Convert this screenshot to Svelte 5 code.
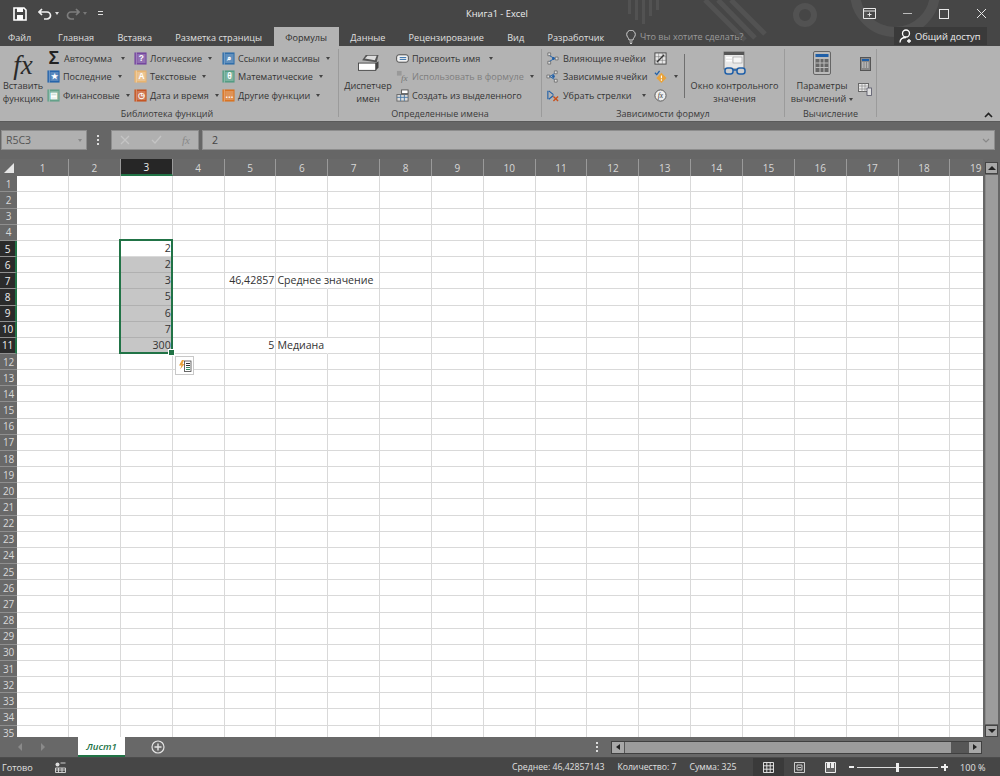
<script>
	const tabs = ['Главная', 'Вставка', 'Разметка страницы', 'Формулы', 'Данные', 'Рецензирование', 'Вид', 'Разработчик'];

	const libCols = [
		[
			{ t: 'Автосумма', k: 'sum', wide: true },
			{ t: 'Последние', k: 'book', c: '#1f5fa8', g: '★' },
			{ t: 'Финансовые', k: 'book', c: '#5f9f86', g: '▤' }
		],
		[
			{ t: 'Логические', k: 'book', c: '#70409c', g: '?' },
			{ t: 'Текстовые', k: 'book', c: '#e8b26c', g: 'A' },
			{ t: 'Дата и время', k: 'book', c: '#c4501c', g: '◷' }
		],
		[
			{ t: 'Ссылки и массивы', k: 'book', c: '#2a6aa8', g: '⌕' },
			{ t: 'Математические', k: 'book', c: '#4f9a80', g: 'θ' },
			{ t: 'Другие функции', k: 'book', c: '#d9701c', g: '…' }
		]
	];

	const rows = Array.from({ length: 35 }, (_, i) => i + 1);
	const cols = Array.from({ length: 19 }, (_, i) => i + 1);
	const cells = {
		'5-3': '2', '6-3': '2', '7-3': '3', '8-3': '5', '9-3': '6', '10-3': '7', '11-3': '300',
		'7-5': '46,42857', '11-5': '5'
	};
	const labels = { '7-6': 'Среднее значение', '11-6': 'Медиана' };
	const selected = (r) => r >= 5 && r <= 11;
</script>

{#snippet arrow()}<span class="caret"></span>{/snippet}

{#snippet book(c, g)}
	<svg class="ico" viewBox="0 0 14 14">
		<rect x="0.5" y="0.5" width="13" height="13" fill={c} />
		<rect x="2" y="0.5" width="0.8" height="13" fill="#fff" fill-opacity="0.55" />
		<rect x="3.500" y="2" width="9" height="10" fill="#f2f2f2" fill-opacity="0.28" />
		<text x="8" y="10.2" text-anchor="middle" font-size="9" font-weight="700" fill="#fff" font-family="Liberation Sans, sans-serif">{g}</text>
	</svg>
{/snippet}

<div class="app">
	<header class="title">
		<svg class="pattern" viewBox="0 0 1000 46">
			<g fill="#525252">
				<rect x="628" y="0" width="3" height="14" /><rect x="635" y="0" width="3" height="20" />
				<rect x="642" y="0" width="3" height="24" /><rect x="649" y="0" width="3" height="16" />
				<rect x="656" y="0" width="3" height="10" />
			</g>
			<g fill="none" stroke="#525252">
				<circle cx="805" cy="15" r="9" stroke-width="6" />
				<circle cx="895" cy="-8" r="40" stroke-width="10" />
				<path d="M705 0 L745 40 M718 0 L755 38 M731 0 L765 34" stroke-width="5" />
			</g>
		</svg>
		<div class="qat">
			<svg width="14" height="14" viewBox="0 0 14 14"><path d="M1 1h10l2 2v10H1z" fill="none" stroke="#fff" stroke-width="1.6" /><rect x="4" y="1" width="6" height="4" fill="#fff" /><rect x="4" y="8" width="6" height="5" fill="#fff" /></svg>
			<svg class="undo" width="14" height="12" viewBox="0 0 14 12"><path d="M4 1 1 4l3 3M1 4h8a3.500 3.500 0 0 1 0 7H6" fill="none" stroke="#f0f0f0" stroke-width="1.7" /></svg>
			{@render arrow()}
			<svg class="redo" width="14" height="12" viewBox="0 0 14 12"><path d="M10 1l3 3-3 3M13 4H5a3.500 3.500 0 0 0 0 7h3" fill="none" stroke="#7d7d7d" stroke-width="1.7" /></svg>
			<span class="caret dim"></span>
			<span class="custom"></span>
		</div>
		<div class="doc">Книга1 - Excel</div>
		<div class="win">
			<svg width="13" height="11" viewBox="0 0 13 11"><path d="M.5.500h12v10H.500zM.5 3h12" fill="none" stroke="#e8e8e8" /><path d="M6.500 4.500v4M4.500 6.500h4" stroke="#e8e8e8" /></svg>
			<span class="min"></span>
			<span class="max"></span>
			<svg width="11" height="11" viewBox="0 0 11 11"><path d="M1 1l9 9M10 1l-9 9" stroke="#e8e8e8" stroke-width="1" /></svg>
		</div>
	</header>

	<nav class="tabs">
		<span class="tab file">Файл</span>
		{#each tabs as t}
			<span class="tab" class:active={t === 'Формулы'}>{t}</span>
		{/each}
		<span class="tell">
			<svg width="10" height="14" viewBox="0 0 10 14"><path d="M3 10c0-2-2.300-3-2.300-5.500a4.300 4.300 0 0 1 8.600 0C9.300 7 7 8 7 10zM3.500 12h3M4 13.500h2" fill="none" stroke="#cfcfcf" /></svg>
			Что вы хотите сделать?
		</span>
		<span class="share">
			<svg width="14" height="14" viewBox="0 0 14 14"><circle cx="7" cy="4.500" r="3.500" fill="none" stroke="#fff" stroke-width="1.300" /><path d="M1 13.500c0-3.500 2.500-5 6-5M10 10v4M8 12h4" fill="none" stroke="#fff" stroke-width="1.300" /></svg>
			Общий доступ
		</span>
	</nav>

	<section class="ribbon">
		<div class="group lib">
			<div class="body">
				<div class="big fxbtn">
					<span class="fxmark">fx</span>
					<span>Вставить<br />функцию</span>
				</div>
				{#each libCols as col, i}
					<div class="col col{i}">
						{#each col as it}
							<div class="item">
								{#if it.k === 'sum'}
									<span class="sigma">Σ</span>
								{:else}
									{@render book(it.c, it.g)}
								{/if}
								<span>{it.t}</span>
								<span class="caret dark" class:wide={it.wide}></span>
							</div>
						{/each}
					</div>
				{/each}
			</div>
			<div class="label">Библиотека функций</div>
		</div>

		<div class="group names">
			<div class="body">
				<div class="big mgr">
					<svg width="23" height="20" viewBox="0 0 24 22">
						<path d="M5 7 9 1h14l-2 8z" fill="#555" /><path d="M8 5l3-3h10l-2 5z" fill="#ddd" />
						<rect x="1" y="10" width="19" height="8" fill="#fff" stroke="#444" />
						<path d="M20 10l3-2v7l-3 3z" fill="#444" />
					</svg>
					<span>Диспетчер<br />имен</span>
				</div>
				<div class="col">
					<div class="item">
						<svg class="ico" viewBox="0 0 14 14"><rect x="0.700" y="3" width="12.600" height="8" rx="2.500" fill="#f2f2f2" stroke="#444" /><path d="M4 6h7M4 8h7" stroke="#2a6aa8" /></svg>
						<span>Присвоить имя</span><span class="caret dark wide"></span>
					</div>
					<div class="item off">
						<svg class="ico" viewBox="0 0 14 14"><rect x="1" y="1" width="5" height="5" fill="#999" /><text x="9" y="12" text-anchor="middle" font-size="10" font-style="italic" font-family="Liberation Serif, serif" fill="#777">fx</text></svg>
						<span>Использовать в формуле</span><span class="caret dark"></span>
					</div>
					<div class="item">
						<svg class="ico" viewBox="0 0 14 14"><rect x="1" y="6" width="12" height="7" fill="#dcdcdc" stroke="#666" /><path d="M1 9h12M5 6v7M9 6v7" stroke="#4a7aa8" /><rect x="6" y="1" width="7" height="4" fill="#fff" stroke="#555" /></svg>
						<span>Создать из выделенного</span>
					</div>
				</div>
			</div>
			<div class="label">Определенные имена</div>
		</div>

		<div class="group deps">
			<div class="body">
				<div class="col tight">
					<div class="item">
						<svg class="ico" viewBox="0 0 14 14"><path d="M2 1h3v3H2zM2 10h3v3H2zM10 5.500h3v3h-3z" fill="#ddd" stroke="#555" stroke-width=".7" /><path d="M4 4l5 3M4 10l5-3" stroke="#1f5fa8" fill="none" /><circle cx="8" cy="7" r="1.500" fill="#1f5fa8" /></svg>
						<span>Влияющие ячейки</span>
					</div>
					<div class="item">
						<svg class="ico" viewBox="0 0 14 14"><path d="M1 5.500h3v3H1zM9 1h3v3H9zM9 10h3v3H9z" fill="#ddd" stroke="#555" stroke-width=".7" /><path d="M4 7l5-3M4 7l5 3" stroke="#1f5fa8" fill="none" /><circle cx="8" cy="7" r="1.500" fill="#1f5fa8" /></svg>
						<span>Зависимые ячейки</span>
					</div>
					<div class="item">
						<svg class="ico" viewBox="0 0 14 14"><path d="M2 2v9M3 2l5 4M3 11l5-4" stroke="#1f5fa8" fill="none" stroke-width="1.200" /><path d="M8 8l5 5M13 8l-5 5" stroke="#c9501c" stroke-width="1.500" /></svg>
						<span>Убрать стрелки</span><span class="caret dark wide"></span>
					</div>
				</div>
				<div class="col small">
					<div class="item">
						<svg class="ico" viewBox="0 0 14 14"><rect x="1" y="1" width="12" height="12" fill="#e8e8e8" stroke="#444" /><path d="M1 5h12M5 1v12M9 1v12M1 9h12" stroke="#777" stroke-width=".6" /><path d="M3 11 11 3" stroke="#333" stroke-width="1.400" /></svg>
					</div>
					<div class="item">
						<svg class="ico" viewBox="0 0 14 14"><path d="M1 3l2 2 3-4" fill="none" stroke="#1f5fa8" stroke-width="1.300" /><path d="M8 3l5.500 5.500L8 14 2.500 8.500z" fill="#e8a33c" /><path d="M8 6v3M8 10v1.500" stroke="#fff" stroke-width="1.200" /></svg>
						<span class="caret dark"></span>
					</div>
					<div class="item">
						<svg class="ico" viewBox="0 0 14 14"><circle cx="7" cy="7" r="6" fill="#eee" stroke="#555" /><text x="7" y="10" text-anchor="middle" font-size="8" font-style="italic" font-family="Liberation Serif, serif" fill="#333">fx</text></svg>
					</div>
				</div>
				<span class="vsep"></span>
				<div class="big watch">
					<svg width="24" height="24" viewBox="0 0 24 24">
						<rect x="1" y="1" width="20" height="17" fill="#e8e8e8" stroke="#777" /><rect x="1" y="1" width="20" height="3" fill="#555" />
						<rect x="3" y="6" width="6" height="1.500" fill="#fff" /><rect x="3" y="9" width="6" height="1.500" fill="#fff" /><rect x="10" y="6" width="9" height="6" fill="#f5f5f5" stroke="#999" stroke-width=".6" />
						<rect x="2" y="17" width="8" height="6" rx="2.500" fill="#ccc" stroke="#1f5fa8" stroke-width="1.500" />
						<rect x="14" y="17" width="8" height="6" rx="2.500" fill="#ccc" stroke="#1f5fa8" stroke-width="1.500" />
						<path d="M10 19h4" stroke="#1f5fa8" stroke-width="1.500" />
					</svg>
					<span>Окно контрольного<br />значения</span>
				</div>
			</div>
			<div class="label">Зависимости формул</div>
		</div>

		<div class="group calc">
			<div class="body">
				<div class="big params">
					<svg width="18" height="24" viewBox="0 0 18 24">
						<rect x=".5" y=".5" width="17" height="23" rx="1.500" fill="#bbb" stroke="#666" />
						<rect x="2.500" y="3" width="13" height="3" fill="#1f5fa8" />
						<g fill="#666"><rect x="2.500" y="8" width="13" height="13" /></g>
						<path d="M7 8v13M11 8v13M2.500 12h13M2.500 16.500h13" stroke="#bbb" />
					</svg>
					<span>Параметры<br />вычислений<span class="caret dark"></span></span>
				</div>
				<div class="col smallcalc">
					<svg width="11" height="14" viewBox="0 0 11 14"><rect x=".5" y=".5" width="10" height="13" fill="#888" stroke="#555" /><rect x="2" y="2" width="7" height="2" fill="#1f5fa8" /><path d="M2 6h7M2 8h7M2 10h7" stroke="#ddd" stroke-dasharray="1.500 1" /></svg>
					<svg width="14" height="13" viewBox="0 0 14 13"><rect x=".5" y=".5" width="10" height="8" fill="#eee" stroke="#666" /><path d="M.5 3h10M.5 6h10M4 .5v8M7 .5v8" stroke="#888" stroke-width=".7" /><rect x="9" y="5" width="4.500" height="7.500" fill="#ddd" stroke="#556" stroke-width=".8" /></svg>
				</div>
			</div>
			<div class="label">Вычисление</div>
		</div>

		<svg class="collapse" width="9" height="6" viewBox="0 0 9 6"><path d="M1 5l3.500-3.500L8 5" fill="none" stroke="#222" stroke-width="1.600" /></svg>
	</section>

	<section class="fbar">
		<div class="namebox">R5C3<span class="caret gray"></span></div>
		<span class="dots"></span>
		<div class="fbtns">
			<svg width="10" height="10" viewBox="0 0 10 10"><path d="M1 1l8 8M9 1 1 9" stroke="#c4c4c4" stroke-width="1.300" /></svg>
			<svg width="11" height="10" viewBox="0 0 11 10"><path d="M1 5l3 3 6-7" fill="none" stroke="#c4c4c4" stroke-width="1.300" /></svg>
			<span class="fxsmall">fx</span>
		</div>
		<div class="finput">2
			<svg width="8" height="5" viewBox="0 0 8 5"><path d="M1 1l3 3 3-3" fill="none" stroke="#888" stroke-width="1.200" /></svg>
		</div>
	</section>

	<main class="sheet">
		<div class="gridwrap">
			<div class="grid">
				<div class="corner"><span class="tri"></span></div>
				{#each cols as c}
					<div class="colhead" class:on={c === 3}>{c}</div>
				{/each}
				{#each rows as r}
					<div class="rowhead" class:on={selected(r)}>{r}</div>
					{#each cols as c}
						<div class="cell" class:sel={c === 3 && r > 5 && r <= 11} class:txt={labels[`${r}-${c}`]}>
							{cells[`${r}-${c}`] ?? labels[`${r}-${c}`] ?? ''}
						</div>
					{/each}
				{/each}
			</div>
			<div class="selbox"><span class="handle"></span></div>
			<div class="smart">
				<svg width="14" height="14" viewBox="0 0 14 14"><path d="M4 1 1 6.500H3.500L2 10.500 6.500 5H4.500L6 1z" fill="#e8a33c" /><rect x="6.500" y="2" width="6.500" height="10.500" fill="#fff" stroke="#444" stroke-width=".8" /><path d="M8 4.500h4M8 6.500h4" stroke="#333" /><path d="M8 8.500h4M8 10.500h4" stroke="#2f8a5f" /></svg>
			</div>
		</div>
		<div class="vscroll">
			<span class="sbtn"><i class="up"></i></span>
			<span class="vthumb"></span>
			<span class="sbtn"><i class="down"></i></span>
		</div>
	</main>

	<section class="tabbar">
		<span class="nav left"></span>
		<span class="nav right"></span>
		<span class="sheettab">Лист1</span>
		<svg class="addsheet" width="14" height="14" viewBox="0 0 14 14"><circle cx="7" cy="7" r="6" fill="none" stroke="#e4e4e4" stroke-width="1.200" /><path d="M7 3.500v7M3.500 7h7" stroke="#e4e4e4" stroke-width="1.400" /></svg>
		<span class="dots bar"></span>
		<div class="hscroll">
			<span class="hbtn"><i class="lf"></i></span>
			<span class="hthumb"></span>
			<span class="hbtn"><i class="rt"></i></span>
		</div>
	</section>

	<footer class="status">
		<span class="ready">Готово</span>
		<svg width="11" height="11" viewBox="0 0 11 11"><circle cx="2.500" cy="2.500" r="2" fill="#ddd" /><path d="M5.500 1h5M.5 6h10v4.500H.5zM3.500 6v4.500M7 6v4.500M.5 8h10" fill="none" stroke="#ddd" stroke-width=".9" /></svg>
		<span class="stats">
			<span>Среднее: 46,42857143</span>
			<span>Количество: 7</span>
			<span>Сумма: 325</span>
		</span>
		<span class="view on">
			<svg width="11" height="11" viewBox="0 0 11 11"><path d="M.5.500h10v10H.5zM3.800.5v10M7.200.5v10M.5 3.800h10M.5 7.200h10" fill="none" stroke="#eee" stroke-width=".9" /></svg>
		</span>
		<span class="view">
			<svg width="11" height="11" viewBox="0 0 11 11"><path d="M.5.500h10v10H.5zM3 3h5v5H3zM4 5.500h3" fill="none" stroke="#ddd" stroke-width=".9" /></svg>
		</span>
		<span class="view">
			<svg width="11" height="11" viewBox="0 0 11 11"><path d="M.5.500h10v10H.5z" fill="#666" stroke="#eee" /><rect x="2" y="0" width="3" height="6" fill="#eee" /><rect x="6" y="0" width="3" height="6" fill="#eee" /></svg>
		</span>
		<span class="zoom">
			<span class="zm"></span>
			<span class="slider"><i></i></span>
			<span class="zp"></span>
		</span>
		<span class="pct">100 %</span>
	</footer>
</div>

<style>
	:global(body) {
		margin: 0;
		background: #464646;
	}

	.app {
		width: 1000px;
		height: 776px;
		overflow: hidden;
		display: flex;
		flex-direction: column;
		font-family: 'Open Sans', 'Noto Sans', sans-serif;
		font-size: 9.1px;
		color: #333;
		position: relative;
	}

	svg {
		flex: none;
		display: block;
	}

	.caret {
		display: inline-block;
		width: 0;
		height: 0;
		margin-left: 3px;
		border-left: 2.5px solid transparent;
		border-right: 2.5px solid transparent;
		border-top: 3px solid #ddd;
		vertical-align: middle;
	}
	.caret.dim {
		border-top-color: #777;
	}
	.caret.dark {
		border-top-color: #444;
	}
	.caret.gray {
		border-top-color: #888;
	}
	.caret.wide {
		margin-left: 6px;
	}

	/* title bar */
	.title {
		height: 27px;
		flex: none;
		background: #464646;
		color: #eee;
		display: flex;
		align-items: center;
		position: relative;
	}
	.pattern {
		position: absolute;
		left: 0;
		top: 0;
		width: 1000px;
		height: 46px;
	}
	.qat,
	.doc,
	.win {
		position: relative;
	}
	.qat {
		display: flex;
		align-items: center;
		padding-left: 13px;
		width: 280px;
		flex: none;
	}
	.undo {
		margin-left: 11px;
	}
	.redo {
		margin-left: 7px;
	}
	.custom {
		width: 5px;
		height: 5px;
		margin-left: 11px;
		border-top: 1px solid #ddd;
		box-sizing: border-box;
		background: linear-gradient(#ddd, #ddd) center/5px 1px no-repeat;
	}
	.doc {
		margin-left: 173px;
		font-size: 9.3px;
		white-space: nowrap;
	}
	.win {
		margin-left: auto;
		display: flex;
		align-items: center;
		gap: 27px;
		padding-right: 13px;
	}
	.min {
		width: 9px;
		border-top: 1px solid #bbb;
	}
	.max {
		width: 8px;
		height: 8px;
		border: 1px solid #e8e8e8;
	}

	/* tabs */
	.tabs {
		height: 19px;
		flex: none;
		display: flex;
		align-items: stretch;
		position: relative;
		color: #e0e0e0;
		padding-left: 8px;
	}
	.tab {
		display: flex;
		align-items: center;
		padding: 1px 11.700px 0;
		white-space: nowrap;
		font-size: 9.1px;
	}
	.tab.file {
		padding: 1px 15px 0 0;
	}
	.tab.active {
		background: #b3b3b3;
		color: #2e2e2e;
	}
	.tell {
		display: flex;
		align-items: center;
		gap: 4px;
		margin-left: 10px;
		color: #9a9a9a;
		font-size: 9.1px;
		white-space: nowrap;
	}
	.share {
		position: absolute;
		left: 894px;
		top: 0;
		width: 93px;
		height: 18px;
		box-sizing: border-box;
		background: #3a3a3a;
		color: #eee;
		display: flex;
		align-items: center;
		gap: 2px;
		padding-left: 5px;
		white-space: nowrap;
		font-size: 9.3px;
	}

	/* ribbon */
	.ribbon {
		height: 75px;
		flex: none;
		background: #b3b3b3;
		display: flex;
		position: relative;
		border-bottom: 1px solid #5a5a5a;
		box-sizing: content-box;
	}
	.group {
		display: flex;
		flex-direction: column;
		border-right: 1px solid #9b9b9b;
		margin: 3px 0 4px;
		box-sizing: border-box;
		flex: none;
	}
	.lib {
		width: 339px;
	}
	.lib .label {
		padding-right: 4px;
	}
	.names {
		width: 203px;
	}
	.deps {
		width: 243px;
	}
	.calc {
		width: 92px;
	}
	.body {
		flex: 1;
		display: flex;
		min-height: 0;
	}
	.label {
		height: 13px;
		line-height: 12px;
		margin-bottom: -4px;
		text-align: center;
		color: #3a3a3a;
		font-size: 9px;
		white-space: nowrap;
	}
	.col {
		display: flex;
		flex-direction: column;
		flex: none;
	}
	.item {
		height: 18.500px;
		display: flex;
		align-items: center;
		gap: 3px;
		white-space: nowrap;
	}
	.item.off {
		color: #7e7e7e;
	}
	.ico {
		width: 13px;
		height: 13px;
	}
	.sigma {
		width: 14px;
		font: 700 18px/16px 'Liberation Sans', sans-serif;
		color: #222;
		text-align: center;
	}
	.big {
		display: flex;
		flex-direction: column;
		align-items: center;
		text-align: center;
		line-height: 13px;
		flex: none;
		white-space: nowrap;
	}
	.fxbtn {
		width: 46px;
	}
	.fxmark {
		font: italic 27px/30px 'Liberation Serif', serif;
		color: #2a2a2a;
		height: 29px;
		margin-top: 1px;
	}
	.col0 {
		width: 87px;
		margin-left: 1px;
	}
	.col1 {
		width: 88px;
	}
	.mgr {
		width: 50px;
		margin-left: 4px;
	}
	.mgr svg {
		margin: 5px 0;
	}
	.names .col {
		margin-left: 3px;
	}
	.tight {
		width: 108px;
		margin-left: 4px;
	}
	.tight .item {
		gap: 4px;
	}
	.small {
		width: 30px;
	}
	.small .caret {
		margin-left: 4px;
	}
	.vsep {
		width: 1px;
		height: 44px;
		margin-top: 5px;
		background: #6f6f6f;
		flex: none;
	}
	.watch {
		width: 99px;
	}
	.watch svg {
		margin: 2px 0 4px;
	}
	.params {
		width: 68px;
		margin-left: 3px;
	}
	.params svg {
		margin: 2px 0 4px;
	}
	.smallcalc {
		gap: 12px;
		padding: 8px 0 0 2px;
		align-items: center;
	}
	.collapse {
		position: absolute;
		left: 984px;
		top: 66px;
	}

	/* formula bar */
	.fbar {
		height: 37px;
		flex: none;
		background: #666;
		box-sizing: border-box;
		padding-top: 8px;
		display: flex;
		align-items: flex-start;
		color: #444;
		font-size: 10.5px;
	}
	.namebox,
	.fbtns,
	.finput {
		height: 20px;
		box-sizing: border-box;
		background: #b0b0b0;
		border: 1px solid #8d8d8d;
		display: flex;
		align-items: center;
	}
	.namebox {
		width: 86px;
		margin-left: 1px;
		padding: 0 4px;
		justify-content: space-between;
		color: #555;
	}
	.dots {
		width: 2px;
		height: 2px;
		background: #ddd;
		box-shadow: 0 -4px #ddd, 0 4px #ddd;
		margin: 9px 12px 0 10px;
		flex: none;
	}
	.fbtns {
		width: 88px;
		justify-content: space-between;
		padding: 0 8px;
	}
	.fxsmall {
		font: italic 11px 'Liberation Serif', serif;
		color: #888;
	}
	.finput {
		margin-left: 3px;
		width: 793px;
		padding: 0 4px 0 9px;
		justify-content: space-between;
	}

	/* sheet */
	.sheet {
		height: 578px;
		flex: none;
		display: flex;
		background: #666;
	}
	.gridwrap {
		position: relative;
		width: 983px;
		overflow: hidden;
		flex: none;
	}
	.grid {
		display: grid;
		grid-template-columns: 17.200px repeat(19, 51.850px);
		grid-template-rows: 17.300px repeat(35, 16.170px);
		background: #fff;
	}
	.corner,
	.colhead,
	.rowhead {
		background: #696969;
		color: #d8d8d8;
		display: flex;
		align-items: center;
		justify-content: center;
		font-size: 10px;
		box-sizing: border-box;
		overflow: hidden;
	}
	.corner {
		position: relative;
	}
	.tri {
		position: absolute;
		right: 3px;
		bottom: 3px;
		border-left: 10px solid transparent;
		border-bottom: 10px solid #e6e6e6;
	}
	.colhead {
		border-right: 1px solid #9a9a9a;
	}
	.colhead.on {
		background: #262626;
		color: #eee;
		border-bottom: 2px solid #217346;
	}
	.rowhead {
		border-bottom: 1px solid #8f8f8f;
	}
	.rowhead.on {
		background: #2b2b2b;
		color: #eee;
		border-right: 2px solid #217346;
	}
	.cell {
		border-right: 1px solid #d9d9d9;
		border-bottom: 1px solid #d9d9d9;
		box-sizing: border-box;
		text-align: right;
		padding: 0 1px;
		line-height: 15px;
		font-size: 10.6px;
		color: #333;
		white-space: nowrap;
	}
	.cell.txt {
		text-align: left;
		overflow: visible;
		border-right-color: transparent;
	}
	.cell.sel {
		background: #c6c6c6;
		border-right-color: #c6c6c6;
		border-bottom-color: #b0b0b0;
	}
	.selbox {
		position: absolute;
		left: 119px;
		top: 80px;
		width: 54px;
		height: 115px;
		box-sizing: border-box;
		border: 2px solid #217346;
	}
	.handle {
		position: absolute;
		right: -4px;
		bottom: -4px;
		width: 5px;
		height: 5px;
		background: #217346;
		border: 1px solid #fff;
	}
	.smart {
		position: absolute;
		left: 175px;
		top: 197px;
		width: 19px;
		height: 19px;
		box-sizing: border-box;
		background: #fff;
		border: 1px solid #c8c8c8;
		display: flex;
		align-items: center;
		justify-content: center;
	}
	.vscroll {
		flex: 1;
		display: flex;
		flex-direction: column;
		align-items: center;
		padding-top: 3px;
		gap: 1px;
	}
	.sbtn {
		width: 13px;
		height: 12px;
		background: #a8a8a8;
		border: 1px solid #444;
		box-sizing: border-box;
		display: flex;
		align-items: center;
		justify-content: center;
		flex: none;
	}
	.up {
		border-left: 4px solid transparent;
		border-right: 4px solid transparent;
		border-bottom: 4px solid #222;
	}
	.down {
		border-left: 4px solid transparent;
		border-right: 4px solid transparent;
		border-top: 4px solid #222;
	}
	.vthumb {
		flex: 1;
		width: 13px;
		background: #9c9c9c;
		border-left: 1px solid #8a8a8a;
		box-sizing: border-box;
	}

	/* sheet tabs */
	.tabbar {
		height: 21px;
		flex: none;
		background: #686868;
		display: flex;
		align-items: center;
		position: relative;
		border-bottom: 1px solid #4c4c4c;
		box-sizing: border-box;
	}
	.nav {
		width: 0;
		border-top: 4px solid transparent;
		border-bottom: 4px solid transparent;
	}
	.nav.left {
		margin-left: 18px;
		border-right: 4px solid #8a8a8a;
	}
	.nav.right {
		margin-left: 19px;
		border-left: 4px solid #8a8a8a;
	}
	.sheettab {
		margin-left: 33px;
		width: 47px;
		align-self: stretch;
		box-sizing: border-box;
		background: #fff;
		border-bottom: 2px solid #217346;
		color: #217346;
		font-weight: 600;
		font-style: italic;
		font-size: 9.6px;
		display: flex;
		align-items: center;
		justify-content: center;
	}
	.addsheet {
		margin-left: 26px;
	}
	.dots.bar {
		margin: 0 0 0 431px;
	}
	.hscroll {
		margin-left: 13px;
		width: 371px;
		height: 13px;
		background: #565656;
		border: 1px solid #404040;
		box-sizing: border-box;
		display: flex;
	}
	.hbtn {
		width: 12px;
		background: #a8a8a8;
		display: flex;
		align-items: center;
		justify-content: center;
		flex: none;
	}
	.lf {
		border-top: 3px solid transparent;
		border-bottom: 3px solid transparent;
		border-right: 4px solid #222;
	}
	.rt {
		border-top: 3px solid transparent;
		border-bottom: 3px solid transparent;
		border-left: 4px solid #222;
	}
	.hthumb {
		width: 326px;
		background: #9c9c9c;
		margin-left: 1px;
		margin-right: auto;
	}

	/* status */
	.status {
		flex: 1;
		background: #464646;
		color: #e0e0e0;
		display: flex;
		align-items: center;
		white-space: nowrap;
	}
	.ready {
		width: 55px;
		padding-left: 2px;
		box-sizing: border-box;
	}
	.stats {
		margin-left: 446px;
		width: 241px;
		display: flex;
		gap: 13px;
		font-size: 8.700px;
	}
	.view {
		width: 31px;
		height: 100%;
		display: flex;
		align-items: center;
		justify-content: center;
	}
	.view.on {
		background: #3a3a3a;
	}
	.zoom {
		display: flex;
		align-items: center;
		margin-left: 3px;
	}
	.zm {
		width: 5px;
		border-top: 2px solid #eee;
	}
	.zp {
		width: 7px;
		height: 7px;
		background:
			linear-gradient(#eee, #eee) center/7px 2px no-repeat,
			linear-gradient(#eee, #eee) center/2px 7px no-repeat;
	}
	.slider {
		width: 81px;
		margin: 0 3px;
		border-top: 1px solid #ddd;
		position: relative;
	}
	.slider i {
		position: absolute;
		left: 39px;
		top: -5px;
		width: 3px;
		height: 9px;
		background: #eee;
	}
	.pct {
		margin-left: 12px;
	}
</style>
